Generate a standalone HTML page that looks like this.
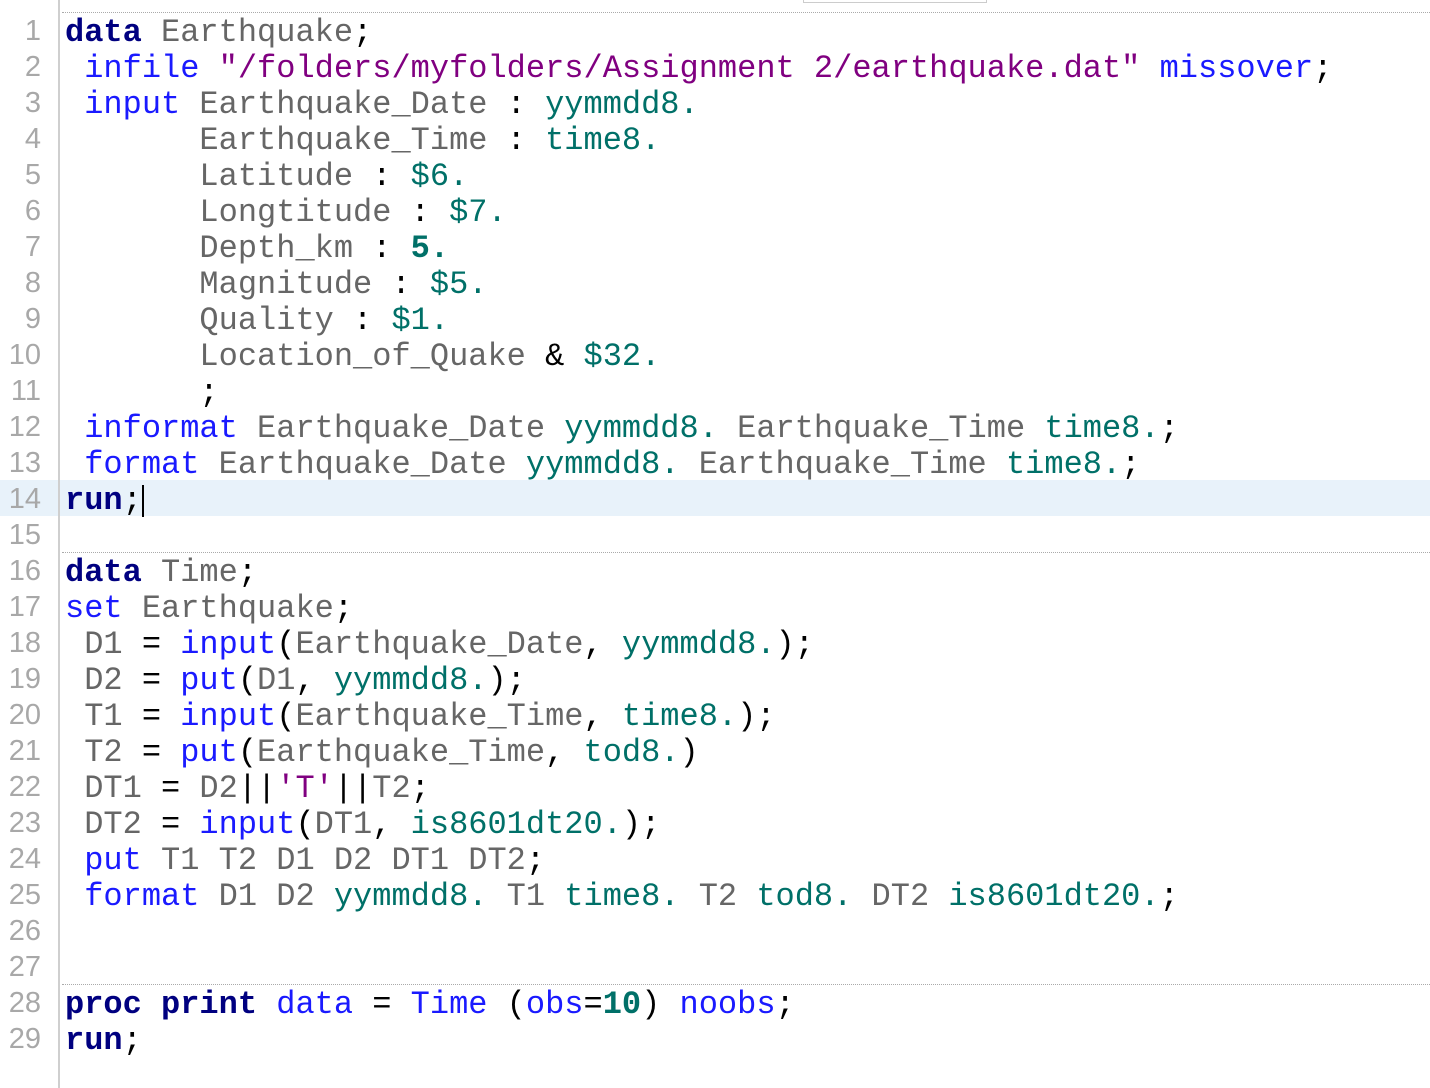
<!DOCTYPE html>
<html><head><meta charset="utf-8"><style>
body{margin:0;width:1430px;height:1088px;background:#fff;overflow:hidden;position:relative;font-family:"Liberation Mono","Courier New",monospace;}
.g{position:absolute;left:58px;top:0;width:2px;height:1088px;background:#cfcfcf;}
.top{position:absolute;left:803px;top:0;width:182px;height:2px;border:1px solid #ccc;border-top:none;}
.dot{position:absolute;left:62px;right:0;height:0;border-top:1px dotted #aaa;}
.hl{position:absolute;left:0;top:480px;width:1430px;height:36px;background:#e8f2fa;}
.n{position:absolute;left:0;width:41px;text-align:right;font-family:"Liberation Sans",sans-serif;font-size:29px;color:#a8a8a8;line-height:36px;margin-top:1px;}
.l{position:absolute;left:65px;font-size:32px;line-height:36px;white-space:pre;color:#000;margin-top:3px;}
.k{color:#1a1aff}.b{color:#000080;font-weight:bold}.v{color:#666}.s{color:#800080}.f{color:#007068}.fb{color:#007068;font-weight:bold}
.cur{display:inline-block;width:2px;height:32px;background:#000;vertical-align:middle;}
</style></head><body>
<div class="hl"></div>
<div class="top"></div>
<div class="g"></div>
<div class="dot" style="top:12px"></div>
<div class="dot" style="top:552px"></div>
<div class="dot" style="top:984px"></div>
<div class="n" style="top:12px">1</div><div class="n" style="top:48px">2</div><div class="n" style="top:84px">3</div><div class="n" style="top:120px">4</div><div class="n" style="top:156px">5</div><div class="n" style="top:192px">6</div><div class="n" style="top:228px">7</div><div class="n" style="top:264px">8</div><div class="n" style="top:300px">9</div><div class="n" style="top:336px">10</div><div class="n" style="top:372px">11</div><div class="n" style="top:408px">12</div><div class="n" style="top:444px">13</div><div class="n" style="top:480px">14</div><div class="n" style="top:516px">15</div><div class="n" style="top:552px">16</div><div class="n" style="top:588px">17</div><div class="n" style="top:624px">18</div><div class="n" style="top:660px">19</div><div class="n" style="top:696px">20</div><div class="n" style="top:732px">21</div><div class="n" style="top:768px">22</div><div class="n" style="top:804px">23</div><div class="n" style="top:840px">24</div><div class="n" style="top:876px">25</div><div class="n" style="top:912px">26</div><div class="n" style="top:948px">27</div><div class="n" style="top:984px">28</div><div class="n" style="top:1020px">29</div>
<div class="l" style="top:12px"><span class="b">data</span> <span class="v">Earthquake</span>;</div>
<div class="l" style="top:48px"> <span class="k">infile</span> <span class="s">"/folders/myfolders/Assignment 2/earthquake.dat"</span> <span class="k">missover</span>;</div>
<div class="l" style="top:84px"> <span class="k">input</span> <span class="v">Earthquake_Date</span> : <span class="f">yymmdd8.</span></div>
<div class="l" style="top:120px">       <span class="v">Earthquake_Time</span> : <span class="f">time8.</span></div>
<div class="l" style="top:156px">       <span class="v">Latitude</span> : <span class="f">$6.</span></div>
<div class="l" style="top:192px">       <span class="v">Longtitude</span> : <span class="f">$7.</span></div>
<div class="l" style="top:228px">       <span class="v">Depth_km</span> : <span class="fb">5.</span></div>
<div class="l" style="top:264px">       <span class="v">Magnitude</span> : <span class="f">$5.</span></div>
<div class="l" style="top:300px">       <span class="v">Quality</span> : <span class="f">$1.</span></div>
<div class="l" style="top:336px">       <span class="v">Location_of_Quake</span> &amp; <span class="f">$32.</span></div>
<div class="l" style="top:372px">       ;</div>
<div class="l" style="top:408px"> <span class="k">informat</span> <span class="v">Earthquake_Date</span> <span class="f">yymmdd8.</span> <span class="v">Earthquake_Time</span> <span class="f">time8.</span>;</div>
<div class="l" style="top:444px"> <span class="k">format</span> <span class="v">Earthquake_Date</span> <span class="f">yymmdd8.</span> <span class="v">Earthquake_Time</span> <span class="f">time8.</span>;</div>
<div class="l" style="top:480px"><span class="b">run</span>;<span class="cur"></span></div>
<div class="l" style="top:552px"><span class="b">data</span> <span class="v">Time</span>;</div>
<div class="l" style="top:588px"><span class="k">set</span> <span class="v">Earthquake</span>;</div>
<div class="l" style="top:624px"> <span class="v">D1</span> = <span class="k">input</span>(<span class="v">Earthquake_Date</span>, <span class="f">yymmdd8.</span>);</div>
<div class="l" style="top:660px"> <span class="v">D2</span> = <span class="k">put</span>(<span class="v">D1</span>, <span class="f">yymmdd8.</span>);</div>
<div class="l" style="top:696px"> <span class="v">T1</span> = <span class="k">input</span>(<span class="v">Earthquake_Time</span>, <span class="f">time8.</span>);</div>
<div class="l" style="top:732px"> <span class="v">T2</span> = <span class="k">put</span>(<span class="v">Earthquake_Time</span>, <span class="f">tod8.</span>)</div>
<div class="l" style="top:768px"> <span class="v">DT1</span> = <span class="v">D2</span>||<span class="s">'T'</span>||<span class="v">T2</span>;</div>
<div class="l" style="top:804px"> <span class="v">DT2</span> = <span class="k">input</span>(<span class="v">DT1</span>, <span class="f">is8601dt20.</span>);</div>
<div class="l" style="top:840px"> <span class="k">put</span> <span class="v">T1 T2 D1 D2 DT1 DT2</span>;</div>
<div class="l" style="top:876px"> <span class="k">format</span> <span class="v">D1 D2</span> <span class="f">yymmdd8.</span> <span class="v">T1</span> <span class="f">time8.</span> <span class="v">T2</span> <span class="f">tod8.</span> <span class="v">DT2</span> <span class="f">is8601dt20.</span>;</div>
<div class="l" style="top:984px"><span class="b">proc print</span> <span class="k">data</span> = <span class="k">Time</span> (<span class="k">obs</span>=<span class="fb">10</span>) <span class="k">noobs</span>;</div>
<div class="l" style="top:1020px"><span class="b">run</span>;</div>
</body></html>
